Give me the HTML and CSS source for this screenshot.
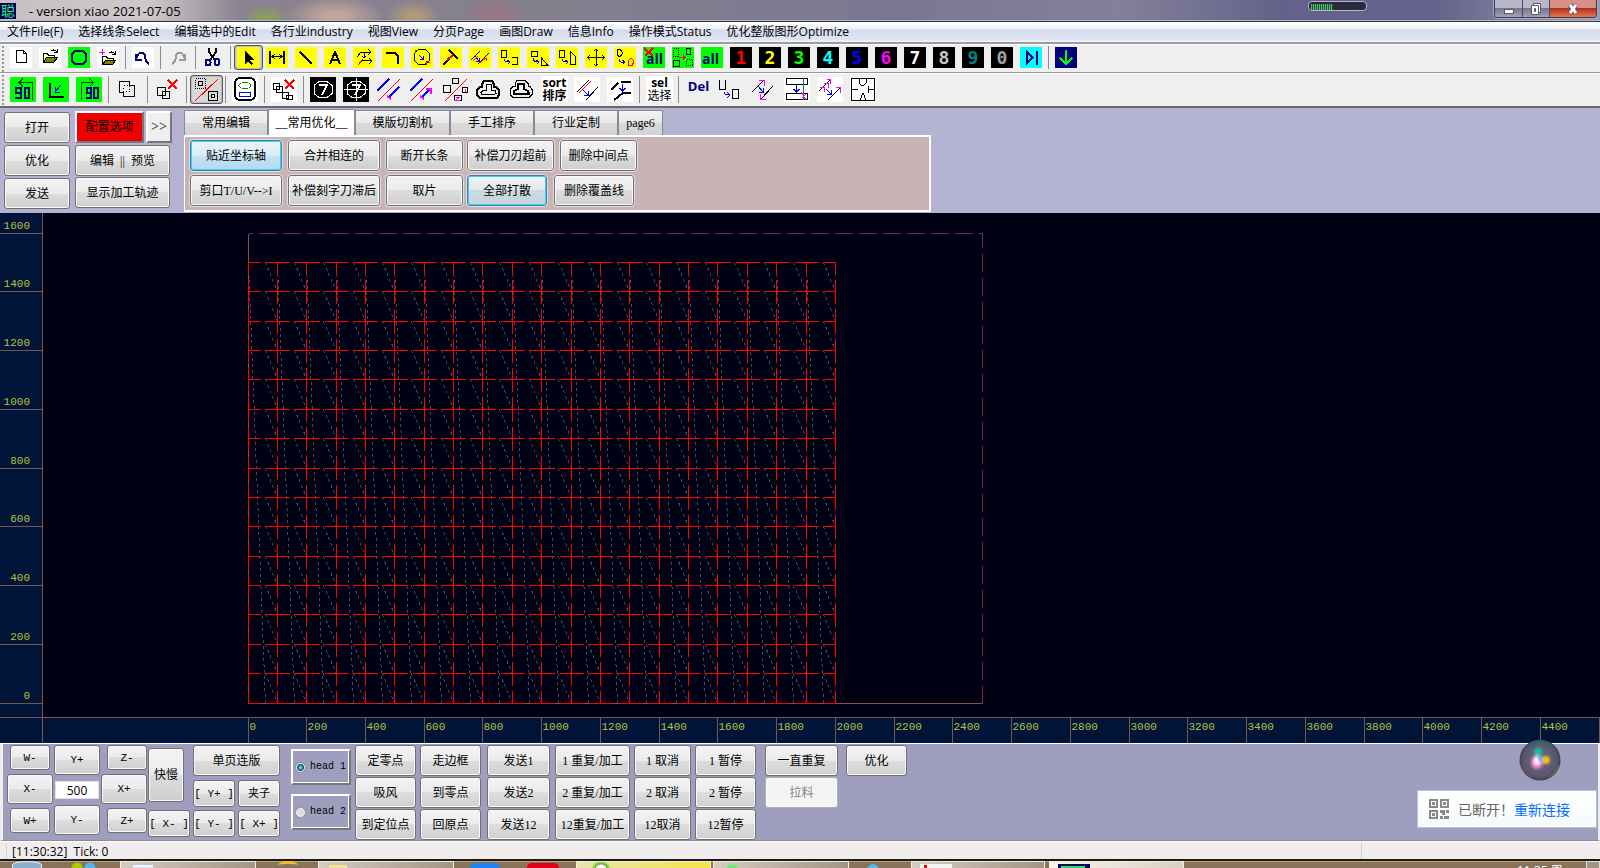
FILE: index.html
```html
<!DOCTYPE html>
<html lang="zh-CN">
<head>
<meta charset="utf-8">
<meta name="viewport" content="width=device-width, initial-scale=1">
<title>version xiao 2021-07-05</title>
<link rel="stylesheet" href="styles.css">
</head>
<body>
<header class="titlebar">
  <span class="app-icon" aria-hidden="true">聪</span>
  <h1 class="title">- version xiao 2021-07-05</h1>
  <span class="meter" aria-hidden="true"><i></i></span>
  <div class="window-buttons">
    <button class="win win-min" aria-label="Minimize"><svg width="12" height="8"><rect x="1.500" y="2.500" width="9" height="4" fill="#fff" stroke="#555a6c"/></svg></button>
    <button class="win win-max" aria-label="Restore"><svg width="12" height="14"><path d="M3.500 1.500h7v9h-7z" fill="#fff" stroke="#555a6c"/><path d="M1.500 3.500h7v9h-7z" fill="#fff" stroke="#555a6c"/><path d="M4.500 6.500h1v3h-1z" fill="#778" stroke="#555a6c"/></svg></button>
    <button class="win win-close" aria-label="Close"><svg width="14" height="12"><path d="M4 2l6 8M10 2l-6 8" stroke="#4b4f60" stroke-width="5"/><path d="M4 2l6 8M10 2l-6 8" stroke="#fff" stroke-width="3"/></svg></button>
  </div>
</header>

<nav class="menubar">
  <a href="#file">文件File(F)</a><a href="#select">选择线条Select</a><a href="#edit">编辑选中的Edit</a><a href="#industry">各行业industry</a><a href="#view">视图View</a><a href="#page">分页Page</a><a href="#draw">画图Draw</a><a href="#info">信息Info</a><a href="#status">操作模式Status</a><a href="#optimize">优化整版图形Optimize</a>
</nav>

<div class="toolbar small" role="toolbar" aria-label="Drawing">
  <button class="tool" aria-label="New"><svg class="w"><path d="M6.500 3.500h7l3 3v9h-10zM13.500 3.500v3h3" fill="#fff" stroke="#000"/></svg></button>
  <button class="tool" aria-label="Open"><svg class="w"><path d="M4.500 15.500v-9h4l1 2h6v2" fill="#ffffc0" stroke="#000"/><path d="M4.500 15.500l3-5h11l-4 5z" fill="#808000" stroke="#000"/><path d="M12 4c2-2 4-1 6 1m0-3v3.500h-3" fill="none" stroke="#000"/></svg></button>
  <button class="tool" aria-label="Ring"><svg class="g"><path d="M7 4h8l3 3v7l-3 3H7l-3-3V7z" fill="none" stroke="#000080" stroke-width="2"/></svg></button>
  <button class="tool" aria-label="Add file"><svg class="w"><path d="M2 5h6M5 2v6" stroke="#f0f" fill="none"/><path d="M5.500 17.500v-8h4l1 2h6v1" fill="#ffffc0" stroke="#000"/><path d="M5.500 17.500l3-4h10l-3 4z" fill="#808000" stroke="#000"/><path d="M12 6c2-2 4-1 6 1m0-3v3.500h-3" fill="none" stroke="#000"/></svg></button>
  <span class="sep"></span>
  <button class="tool" aria-label="Undo"><svg class="w"><path d="M4 7v6h6M4 12c2-8 8-8 9-3 0 4 1 6 4 8" fill="none" stroke="#000080" stroke-width="2"/></svg></button>
  <span class="sep"></span>
  <button class="tool" aria-label="Redo"><svg><path d="M18 7v6h-6M18 12c-2-8-8-8-9-3 0 4-1 6-4 8" fill="none" stroke="#999" stroke-width="2"/></svg></button>
  <span class="sep"></span>
  <button class="tool" aria-label="Cut"><svg><path d="M7 1v4l6 8M14 1v4l-6 8" fill="none" stroke="#000" stroke-width="2"/><ellipse cx="6" cy="15.500" rx="2.500" ry="3" fill="none" stroke="#000080" stroke-width="2"/><ellipse cx="15" cy="15" rx="2.500" ry="3" fill="none" stroke="#000080" stroke-width="2"/></svg></button>
  <span class="sep"></span>
  <button class="tool pressed" aria-label="Pointer" aria-pressed="true"><svg class="y"><path d="M8 4v13l3-3 3 4 2-1-3-4h5z" fill="#000"/></svg></button>
  <button class="tool" aria-label="Distance"><svg class="y"><path d="M4 4v13M18 4v13" stroke="#000" stroke-width="2"/><path d="M6 9.500h10M9 7l-3 2.500L9 12M13 7l3 2.500-3 2.500" stroke="#000" fill="none"/></svg></button>
  <button class="tool" aria-label="Line"><svg class="y"><path d="M5 5l12 12" stroke="#000" stroke-width="2"/></svg></button>
  <button class="tool" aria-label="Text"><svg class="y"><path d="M6 17l5-12 5 12M7.500 13h7" fill="none" stroke="#000" stroke-width="2"/></svg></button>
  <button class="tool" aria-label="Join"><svg class="y"><path d="M4 10l4-5h10m-3-3l3 3-3 3M9 13l10 1m-3-3l3 3-3 3" fill="none" stroke="#000"/><path d="M11 5v6M9 9l2 2 2-2" fill="none" stroke="#00f"/><path d="M10 12l-5 6" fill="none" stroke="#f00"/></svg></button>
  <button class="tool" aria-label="Fillet"><svg class="y"><path d="M4 6h7q5 0 5 5v6" fill="none" stroke="#000" stroke-width="2"/></svg></button>
  <button class="tool" aria-label="Circle"><svg class="y"><circle cx="11" cy="10" r="8" fill="none" stroke="#000"/><path d="M7 3H4v3" fill="none" stroke="#008000"/><path d="M8 8l4 4m0-3v3H9" fill="none" stroke="#00f"/><path d="M15 18l1-4 3 2" fill="none" stroke="#f00"/></svg></button>
  <button class="tool" aria-label="Corner"><svg class="y"><path d="M9 3l9 9M3 18l6-6" stroke="#000" stroke-width="2"/><path d="M7 13l6-5" stroke="#f00" stroke-width="2"/></svg></button>
  <button class="tool" aria-label="Parallel"><svg class="y"><path d="M2 13L11 4M9 17L20 6" stroke="#000"/><path d="M6 9l4 5m0-3v3H7" stroke="#00f" fill="none"/><path d="M4 14l5-5M10 16l7-5m-3 0h3v3" stroke="#f00" fill="none"/></svg></button>
  <button class="tool" aria-label="Copy shape"><svg class="y"><path d="M3.500 3.500h5v7h-5zM14 10.500h5v7h-5" fill="none" stroke="#000"/><path d="M6 12q0 3 5 3m-2-2l3 2-2 2" fill="none" stroke="#00f"/></svg></button>
  <button class="tool" aria-label="Scale shape"><svg class="y"><path d="M4.500 4.500h6v5h-6zM14.500 11v7h6z" fill="none" stroke="#000"/><path d="M6 11q0 4 5 4m-2-2l3 2-2 2" fill="none" stroke="#00f"/></svg></button>
  <button class="tool" aria-label="Shear shape"><svg class="y"><path d="M3.500 3.500h5v7h-5zM14.500 4.500v13h5v-8z" fill="none" stroke="#000"/><path d="M6 12q0 3 5 3m-2-2l3 2-2 2" fill="none" stroke="#00f"/></svg></button>
  <button class="tool" aria-label="Move"><svg class="y"><path d="M3 10.500h16M11 2v17M5 8l-2 2.500L5 13M17 8l2 2.500-2 2.500M9 4l2-2 2 2M9 17l2 2 2-2" fill="none" stroke="#000"/></svg></button>
  <button class="tool" aria-label="Rotate shape"><svg class="y"><path d="M3 3l3-1 3 4-3 4-3-2z" fill="none" stroke="#000"/><path d="M14 14l3-3 3 3-2 5-4-1z" fill="none" stroke="#f00"/><path d="M5 12q0 4 5 3m-2-2l3 2-2 2" fill="none" stroke="#00f"/></svg></button>
  <button class="tool" aria-label="Clear all"><svg class="g"><path d="M1 1l9 8M10 1L2 9" stroke="#f00" stroke-width="2"/><text x="3" y="17" class="all">all</text></svg></button>
  <button class="tool" aria-label="Array"><svg class="g"><path d="M1.500 1.500h5v8h-5zM14.500 12.500h6v6h-6z" fill="none" stroke="#000" stroke-dasharray="1 1"/><path d="M14.500 1.500h4v6h-4zM1.500 13.500h6v6h-6z" fill="none" stroke="#000"/><path d="M7 10.500h6m-2-2l2 2-2 2" fill="none" stroke="#f06"/></svg></button>
  <button class="tool" aria-label="Select all"><svg class="g"><text x="1" y="17" class="all">all</text></svg></button>
  <button class="tool num n1">1</button>
  <button class="tool num n2">2</button>
  <button class="tool num n3">3</button>
  <button class="tool num n4">4</button>
  <button class="tool num n5">5</button>
  <button class="tool num n6">6</button>
  <button class="tool num n7">7</button>
  <button class="tool num n8">8</button>
  <button class="tool num n9">9</button>
  <button class="tool num n0">0</button>
  <button class="tool" aria-label="Next"><svg class="c"><path d="M6.500 4v13l6-6.500zM17 4v14" fill="none" stroke="#000080" stroke-width="2"/></svg></button>
  <span class="sep"></span>
  <button class="tool" aria-label="Down"><svg class="n"><path d="M11 3v14M5 11l6 6 6-6" fill="none" stroke="#0f0" stroke-width="2"/></svg></button>
</div>

<div class="toolbar large" role="toolbar" aria-label="Arrange">
  <button class="tool" aria-label="Rotate left"><svg class="g"><path d="M22.500 23V5.500H9m4-4L9 5.500l4 4" fill="none" stroke="#004000"/><path d="M11 16H6v-5h5v10H5M15 11h4v10h-4z" fill="none" stroke="#000080" stroke-width="2"/></svg></button>
  <button class="tool" aria-label="To origin"><svg class="g"><path d="M7 6v14h14" fill="none" stroke="#000" stroke-width="2"/><path d="M18 8l-6 7m0-5v5h5" fill="none" stroke="#00f"/></svg></button>
  <button class="tool" aria-label="Rotate right"><svg class="g"><path d="M5.500 23V5.500h12m-4-4l4 4-4 4" fill="none" stroke="#004000"/><path d="M15 16h-4v-5h4v10h-5M18 11h4v10h-4z" fill="none" stroke="#000080" stroke-width="2"/></svg></button>
  <span class="sep"></span>
  <button class="tool" aria-label="Merge"><svg><path d="M4.500 4.500h10v4h5v11h-11v-4h-4z" fill="none" stroke="#000"/><path d="M8.500 8.500h6v6h-6z" fill="none" stroke="#000" stroke-dasharray="1 2"/></svg></button>
  <span class="sep"></span>
  <button class="tool" aria-label="Ungroup"><svg><path d="M3.500 10.500h8v8h-8zM8.500 14.500h7v7h-7z" fill="none" stroke="#000"/><path d="M14 3l9 9M23 3l-9 9" stroke="#f00" stroke-width="2"/></svg></button>
  <span class="sep"></span>
  <button class="tool pressed" aria-label="Split" aria-pressed="true"><svg><path d="M2.500 1.500h10v10h-10z" fill="none" stroke="#000" stroke-dasharray="1 1"/><path d="M5.500 4.500h4v4h-4zM15.500 14.500h9v9h-9zM18.500 17.500h3v3h-3z" fill="none" stroke="#000"/><path d="M2 24L25 2" stroke="#f00"/></svg></button>
  <span class="sep"></span>
  <button class="tool" aria-label="Nest"><svg class="w"><rect x="3" y="1" width="20" height="22" rx="5" fill="#fff" stroke="#000" stroke-width="2"/><ellipse cx="13" cy="8.500" rx="6" ry="3" fill="none" stroke="#008000"/><path d="M7.500 15.500h11v4h-11z" fill="none" stroke="#00f"/></svg></button>
  <span class="sep"></span>
  <button class="tool" aria-label="Remove overlaps"><svg class="w"><path d="M2.500 6.500h6v6h-6zM5.500 9.500h6v6h-6zM11.500 15.500h6v6h-6zM15.500 18.500h6v4h-6z" fill="none" stroke="#000"/><path d="M14 3l9 9M23 3l-9 9" stroke="#f00" stroke-width="2"/></svg></button>
  <span class="sep"></span>
  <button class="tool" aria-label="Seven"><svg class="k"><path d="M9 4.500h8l5 4v8l-5 4H9l-5-4v-8z" fill="none" stroke="#fff"/><path d="M9 8h8l-5 10" fill="none" stroke="#fff" stroke-width="2"/></svg></button>
  <button class="tool" aria-label="Seven target"><svg class="k"><path d="M9 4.500h8l5 4v8l-5 4H9l-5-4v-8zM1 12.500h24M13 1v23" fill="none" stroke="#fff"/><path d="M9 8h8l-5 10" fill="none" stroke="#fff" stroke-width="2"/></svg></button>
  <button class="tool" aria-label="Offset"><svg><path d="M1 14L13 2M13 20l10-10" stroke="#00f" stroke-width="2"/><path d="M2 24L24 2" stroke="#f00"/><path d="M11 19l4 3" stroke="#f0f" stroke-width="2"/></svg></button>
  <button class="tool" aria-label="Offset arrow"><svg><path d="M1 14L13 2M13 20l8-8" stroke="#00f" stroke-width="2"/><path d="M2 24L24 2" stroke="#f00"/><path d="M11 19l4 3M17 12h5v5" fill="none" stroke="#f0f" stroke-width="2"/></svg></button>
  <button class="tool" aria-label="Swap"><svg><path d="M1.500 8.500h7v7h-7zM10.500 1.500h6v5h-6z" fill="none" stroke="#000"/><path d="M20.500 10.500h5v5h-5zM12.500 18.500h7v5h-7z" fill="#fff" stroke="#000"/><path d="M23 12v3M14 20h4l-4 3h4" fill="none" stroke="#f0f"/><path d="M3 24L25 2" stroke="#f00"/></svg></button>
  <button class="tool" aria-label="Outline outside"><svg><path d="M9 4h8l2 3v3h2l3 3v5l-2 3H5l-3-3v-5l3-3h2V7z" fill="none" stroke="#000" stroke-width="2"/><path d="M11 7.500h5v6h4l1 3-2 1H7l-1-2 2-2h3z" fill="none" stroke="#000"/></svg></button>
  <button class="tool" aria-label="Outline inside"><svg><path d="M9 3.500h8l3 3v3h2l2 3v5l-3 3H5l-3-3v-5l3-3h2v-3z" fill="none" stroke="#000"/><path d="M10 7h6v5l4 2 1 3H6v-3l4-2z" fill="none" stroke="#000" stroke-width="2"/></svg></button>
  <button class="tool word strong"><span>sort</span><span>排序</span></button>
  <button class="tool" aria-label="Shift line"><svg class="w"><path d="M3 15L15 3" stroke="#000"/><path d="M5 16L17 4" stroke="#f00" stroke-width="1"/><path d="M12 23l12-13" stroke="#000"/><path d="M8 12l6 6m0-4v4h-4" fill="none" stroke="#00f"/></svg></button>
  <button class="tool" aria-label="Shift chain"><svg class="w"><path d="M4 13l7-7M14 5h10M7 23l9-7h8" fill="none" stroke="#000" stroke-width="2"/><path d="M15.500 7v7m-3-3l3 3 3-3" fill="none" stroke="#00f"/></svg></button>
  <span class="sep"></span>
  <button class="tool word"><b>sel</b><span>选择</span></button>
  <span class="sep"></span>
  <button class="tool word del">Del</button>
  <button class="tool" aria-label="Close shape"><svg><path d="M1.500 3v9h6V3M14.500 12.500h6v9h-6z" fill="none" stroke="#000"/><path d="M6 15q0 3 6 3m-3-3l3 3-3 3" fill="none" stroke="#00f"/></svg></button>
  <button class="tool" aria-label="Extend"><svg><path d="M1 15L13 3M10 22L22 9" stroke="#000"/><path d="M8 3.500h5v5M9.500 17v5h5" fill="none" stroke="#f0f"/><path d="M7 9l5 6m0-4v4H8" fill="none" stroke="#00f"/></svg></button>
  <button class="tool" aria-label="Trim"><svg class="w"><path d="M2.500 1.500h21v6h-21zM2.500 16.500h21v6h-21z" fill="none" stroke="#000"/><path d="M19.500 1v22" stroke="#008080"/><path d="M12.500 8v7m-3-3l3 3 3-3" fill="none" stroke="#00f"/><path d="M17 15l5 8m0-6l-4 4" stroke="#f0f"/></svg></button>
  <button class="tool" aria-label="Extend both"><svg class="w"><path d="M2 14L14 2M11 23l13-13" stroke="#000"/><path d="M10 2.500h3v4M3 10.500h4v4M7 6.500h4v4M19 10.500h4v5" fill="none" stroke="#f0f"/><path d="M9 12l5 5m0-4v4h-4" fill="none" stroke="#00f"/></svg></button>
  <button class="tool" aria-label="Notches"><svg class="w"><path d="M1.500 1.500h23v22h-23zM9 2v4l2 2h3l2-2V2M2 12.500h6M24 12.500h-6M18.500 9v7M10 23l3-7 3 7" fill="none" stroke="#000"/></svg></button>
</div>

<section class="panel">
  <div class="quick">
    <div class="col narrow"><button class="btn">打开</button><button class="btn">优化</button><button class="btn">发送</button></div>
    <div class="col wide">
      <div class="pair"><button class="btn red">配置选项</button><button class="btn flat">&gt;&gt;</button></div>
      <button class="btn">编辑 &nbsp;|| &nbsp;预览</button>
      <button class="btn">显示加工轨迹</button>
    </div>
  </div>
  <div class="tabbox">
    <div class="tabs" role="tablist">
      <button class="tab w84" role="tab">常用编辑</button><button class="tab active" role="tab" aria-selected="true">__常用优化__</button><button class="tab w94" role="tab">模版切割机</button><button class="tab w84" role="tab">手工排序</button><button class="tab w84" role="tab">行业定制</button><button class="tab page6" role="tab">page6</button>
    </div>
    <div class="tabpage">
      <div class="line"><button class="btn b92 hot">贴近坐标轴</button><button class="btn b92">合并相连的</button><button class="btn b77">断开长条</button><button class="btn b87">补偿刀刃超前</button><button class="btn b77">删除中间点</button></div>
      <div class="line"><button class="btn b92">剪口T/U/V--&gt;I</button><button class="btn b92">补偿刻字刀滞后</button><button class="btn b77">取片</button><button class="btn b80 focus">全部打散</button><button class="btn b80">删除覆盖线</button></div>
    </div>
  </div>
</section>

<main class="workspace"><svg id="plot" class="plot" role="img" aria-label="Cutting layout"></svg></main>

<section class="controls">
  <div class="jog">
    <div class="jcol"><button class="btn s">W-</button><button class="btn m">X-</button><button class="btn s">W+</button></div>
    <div class="jcol mid"><button class="btn m">Y+</button><input class="step" type="text" value="500" aria-label="Step"><button class="btn m">Y-</button></div>
    <div class="jcol end"><button class="btn s">Z-</button><button class="btn m">X+</button><button class="btn s">Z+</button></div>
  </div>
  <div class="feed">
    <div class="fcol"><button class="btn tall">快慢</button><button class="btn key">[ X- ]</button></div>
    <div class="fgrid"><button class="btn span">单页连版</button><button class="btn key">[ Y+ ]</button><button class="btn key">夹子</button><button class="btn key">[ Y- ]</button><button class="btn key">[ X+ ]</button></div>
  </div>
  <div class="heads">
    <label class="head"><input type="radio" name="head" checked><span>head 1</span></label>
    <label class="head"><input type="radio" name="head"><span>head 2</span></label>
  </div>
  <div class="stack c61"><button class="btn">定零点</button><button class="btn">吸风</button><button class="btn">到定位点</button></div>
  <div class="stack c61"><button class="btn">走边框</button><button class="btn">到零点</button><button class="btn">回原点</button></div>
  <div class="stack c63"><button class="btn">发送1</button><button class="btn">发送2</button><button class="btn">发送12</button></div>
  <div class="stack c75"><button class="btn">1 重复/加工</button><button class="btn">2 重复/加工</button><button class="btn">12重复/加工</button></div>
  <div class="stack c57"><button class="btn">1 取消</button><button class="btn">2 取消</button><button class="btn">12取消</button></div>
  <div class="stack c60"><button class="btn">1 暂停</button><button class="btn">2 暂停</button><button class="btn">12暂停</button></div>
  <div class="stack c73"><button class="btn">一直重复</button><button class="btn" disabled>拉料</button></div>
  <div class="stack c61"><button class="btn">优化</button></div>
  <div class="orb" aria-hidden="true"><svg width="42" height="42"><defs><radialGradient id="glass"><stop offset="0" stop-color="#6d6c88"/><stop offset=".8" stop-color="#59586e"/><stop offset="1" stop-color="#3d4354"/></radialGradient><filter id="soft"><feGaussianBlur stdDeviation="1"/></filter></defs><circle cx="21" cy="21" r="20.500" fill="url(#glass)"/><path d="M6 9a19 19 0 0 1 28-1" fill="none" stroke="#087c6c"/><path d="M3 26a19 19 0 0 0 10 12" fill="none" stroke="#a84060"/><path d="M39 26a19 19 0 0 1-9 12" fill="none" stroke="#8c7840"/><g filter="url(#soft)"><circle cx="19" cy="13" r="4" fill="#00c8a0"/><ellipse cx="18" cy="23" rx="6" ry="7" fill="#f080c0"/><ellipse cx="18" cy="22" rx="3" ry="4" fill="#fff"/><circle cx="22" cy="20" r="3" fill="#60a0ff"/><circle cx="27" cy="21" r="4" fill="#f0c010"/></g></svg></div>
  <div class="notice">
    <svg width="20" height="20" aria-hidden="true"><path d="M1 1h7v7H1zM12 1h7v7h-7zM1 12h7v7H1z" fill="none" stroke="#888" stroke-width="2"/><path d="M3 3h3v3H3zM14 3h3v3h-3zM3 14h3v3H3zM11 11h5v5h-3v-2h-2zM17 11h3v3h-3zM11 17h3v3h-3zM15 17h5v3h-5z" fill="#888"/></svg>
    <span>已断开！<a href="#reconnect">重新连接</a></span>
  </div>
</section>

<footer class="status"><span class="ticks">[11:30:32] &nbsp;Tick: 0</span><span class="status-cell"></span></footer>

<div class="taskbar" aria-hidden="true">
  <i class="t start"></i><i class="t people"></i><i class="t app doc"></i><i class="t ie"></i><i class="t app folder"></i><i class="t blue"></i><i class="t redapp"></i><i class="t app yellow"></i><i class="t app chat"></i><i class="t cloud"></i><i class="t app cad"></i><i class="t app current"></i><span class="clock">11:35 周</span><i class="t desk"></i>
</div>
<script src="plot.js"></script>
</body>
</html>
```
FILE: styles.css
```css
* { box-sizing: border-box; }
body {
  margin: 0;
  min-height: 100vh;
  display: flex;
  flex-direction: column;
  background: #b4b3d2;
  color: #000;
  font: 12px/16px "Open Sans", "Noto Sans CJK SC", sans-serif;
}
button, input { font: inherit; color: inherit; margin: 0; padding: 0; }

/* title bar */
.titlebar {
  height: 22px;
  display: flex;
  align-items: flex-start;
  border-bottom: 1px solid #38364a;
  box-shadow: inset 0 -1px #b5b4c6;
  background:
    radial-gradient(ellipse 24px 16px at 266px 20px, #8aa05c 20%, transparent),
    radial-gradient(ellipse 50px 20px at 335px 16px, #c0a69a 20%, transparent),
    radial-gradient(ellipse 28px 16px at 413px 16px, #b09a78 20%, transparent),
    radial-gradient(ellipse 34px 18px at 494px 14px, #987682 20%, transparent),
    linear-gradient(90deg, #c4c0c4 0, #cfc8c8 150px, #8a8290 240px, #84808e 560px, #7a7792 900px, #83809a 70%, #64628a 80%, #66648c 90%, #9a9ab6 100%);
}
.app-icon { width: 16px; height: 16px; margin-top: 3px; background: #000050; color: #30e880; font-size: 14px; line-height: 16px; text-align: center; }
.title { margin: 0 auto 0 13px; font-size: 13px; font-weight: 400; line-height: 22px; }
.meter { width: 59px; height: 10px; margin: 1px 127px 0 0; padding: 2px; background: #2b2a3c; border: 1px solid #b4b3c8; border-radius: 4px; }
.meter i { display: block; width: 22px; height: 6px; background: repeating-linear-gradient(90deg, #50c070 0 1px, #245038 1px 2px); }
.window-buttons { display: flex; margin-right: 3px; border: 1px solid #3c3b50; border-top: 0; border-radius: 0 0 4px 4px; box-shadow: 0 0 0 1px #aaaabf; overflow: hidden; }
.win { height: 17px; width: 27px; display: flex; align-items: center; justify-content: center; border: 0; border-right: 1px solid #4a495e; background: linear-gradient(#b9b8cb 0 50%, #77768f 50%, #a3a2b8); }
.win-min { width: 28px; padding-top: 5px; }
.win-close { width: 46px; border-right: 0; background: linear-gradient(#d88f85 0 45%, #b4301c 50%, #e07850); }

/* menu */
.menubar { height: 22px; display: flex; gap: 15px; padding: 0 7px; border-bottom: 2px solid #9b9ba3; background: linear-gradient(#fff 0, #edf0f8 7px, #d5dbee 8px, #e0e5f5 18px, #f4f4f4 19px); }
.menubar a { color: #000; text-decoration: none; line-height: 20px; white-space: nowrap; }

/* toolbars */
.toolbar { display: flex; align-items: flex-start; padding-left: 7px; background: radial-gradient(circle, #999 1px, transparent 1px) 1px 4px / 4px 4px repeat-y, #efefef; border-top: 1px solid #fff; }
.small { height: 29px; border-bottom: 1px solid #999; }
.large { height: 35px; border-bottom: 2px solid #696969; padding-top: 1px; }
.tool { flex: none; display: flex; align-items: center; justify-content: center; border: 0; background: none; }
.tool svg { display: block; shape-rendering: crispEdges; }
.small .tool { width: 29px; height: 25px; padding-right: 1px; }
.small svg { width: 22px; height: 21px; }
.large .tool { width: 33px; height: 29px; padding-right: 1px; }
.large svg { width: 26px; height: 25px; }
.tool.pressed { border: 1px solid #555; border-radius: 3px; background: #d8d8d8; box-shadow: inset 0 0 2px #777; }
.sep { flex: none; width: 6px; height: 25px; background: linear-gradient(#8c8c8c, #8c8c8c) 2px 1px / 1px 23px no-repeat; }
.large .sep { height: 28px; background-size: 1px 27px; }
.w { background: #fff; }
.g { background: #0f0; }
.y { background: #ff0; }
.c { background: #0ff; }
.n { background: #000080; }
.k { background: #000; }
.all { font: bold 14px "Open Sans", sans-serif; fill: #000080; }
.small .num { width: 22px; height: 21px; margin: 2px 4px 0 3px; padding: 0; background: #000; font: bold 18px/21px "DejaVu Sans Mono", monospace; }
.n1 { color: #f00; } .n2 { color: #ff0; } .n3 { color: #0f0; } .n4 { color: #0ff; } .n5 { color: #00f; }
.n6 { color: #f0f; } .n7 { color: #fff; } .n8 { color: #c8c8c8; } .n9 { color: #008080; } .n0 { color: #a0a0a0; }
.large .word { width: 27px; height: 26px; margin: 1px 3px; padding: 0; flex-direction: column; background: #fff; font: 12px/13px "Open Sans", "Noto Sans CJK SC", sans-serif; }
.large .strong { font-weight: 700; }
.large .del { justify-content: flex-start; background: none; color: #000080; font-weight: 700; font-size: 13px; line-height: 20px; }

/* buttons */
.btn {
  height: 31px;
  border: 1px solid #707070;
  border-radius: 3px;
  background: linear-gradient(#f3f3f3, #ebebeb 50%, #dddddd 50%, #cfcfcf);
  box-shadow: inset 0 0 0 1px #fafafa;
  font: 12px/16px "Liberation Serif", "Noto Sans CJK SC", serif;
  text-align: center;
  white-space: nowrap;
}
.btn:disabled { background: #f4f4f4; border-color: #adb2b5; color: #838383; }
.btn.hot, .btn.focus { border-color: #3c7fb1; box-shadow: inset 0 0 0 1px #3fd0f8; }
.btn.hot { background: linear-gradient(#eaf4fa, #d9ecf6 50%, #c4e2f4 50%, #b4d8ee); }
.btn.focus { background: linear-gradient(#edf3f6, #e0e9ee 50%, #cddae2 50%, #c5d3dc); }

/* upper panel */
.panel { height: 105px; display: flex; gap: 12px; padding: 1px 0 0 4px; }
.quick { display: flex; gap: 5px; }
.col { display: flex; flex-direction: column; gap: 2px; padding-top: 3px; }
.narrow { width: 66px; }
.wide { width: 97px; padding-top: 2px; gap: 1px; }
.wide > .btn { width: 95px; }
.pair { display: flex; gap: 2px; height: 33px; }
.red, .flat { height: 32px; border-radius: 0; border: 2px solid; border-color: #fff #777 #777 #fff; box-shadow: none; }
.red { width: 69px; background: #f00000; }
.flat { flex: 1; background: #efefef; font-size: 14px; }
.tabbox { width: 747px; }
.tabs { display: flex; align-items: flex-end; height: 26px; }
.tab { height: 25px; border: 1px solid #858b9a; border-bottom: 0; background: linear-gradient(#f2f2f2, #e8e8e8 50%, #dadada 50%, #d2d2d2); font: 12px/16px "Liberation Serif", "Noto Sans CJK SC", serif; white-space: nowrap; }
.w84 { width: 84px; }
.w94 { width: 95px; }
.page6 { width: 45px; }
.tab.active { width: 87px; height: 26px; background: #fff; }
.tabpage { height: 77px; padding: 4px 5px; display: flex; flex-direction: column; gap: 4px; background: #c8b4b4; border: 1px solid #fff; border-width: 1px 2px 2px 1px; box-shadow: inset 0 1px #fff; }
.line { display: flex; gap: 4px; }
.tabpage .btn { outline: 1px solid #e4dcdc; }
.b92 { width: 92px; margin-right: 2px; }
.b77 { width: 77px; }
.b87 { width: 87px; margin-right: 2px; }
.b80 { width: 80px; margin-right: 3px; }

/* plot */
.workspace { flex: 1; min-height: 530px; display: flex; background: #000014; }
.plot { flex: 1; width: 100%; min-height: 530px; shape-rendering: crispEdges; }
.plot text { font: 11px "Liberation Mono", monospace; fill: #b4c23c; }
.ruler { fill: #001438; }
.tick { stroke: #80544e; fill: none; }
.bed { stroke: #802c3c; stroke-dasharray: 18 6; fill: none; }
.cut { stroke: #f00; fill: none; }
.travel { stroke: #484850; stroke-dasharray: 3 3; fill: none; }

/* lower panel */
.controls { position: relative; height: 98px; display: flex; align-items: flex-start; padding: 1px 0 0 4px; background: #a09ebe; border-top: 1px solid #fff; border-bottom: 1px solid #8c8c94; border-left: 3px solid #eee; border-right: 2px solid #eee; }
.jog { display: flex; gap: 1px; }
.jcol { width: 46px; display: flex; flex-direction: column; align-items: center; gap: 4px; }
.jcol.mid { gap: 6px; }
.jcol.end { align-items: flex-end; }
.s { width: 40px; height: 25px; }
.m { width: 46px; height: 30px; }
.jog .btn, .key { font-family: "Liberation Mono", "Noto Sans CJK SC", monospace; font-size: 11px; }
.step { width: 44px; height: 18px; border: 1px solid #e0e0f0; background: #fff; text-align: center; }
.feed { display: flex; gap: 3px; margin-left: 1px; }
.fcol { display: flex; flex-direction: column; width: 42px; gap: 8px; padding-top: 3px; }
.tall { width: 36px; height: 54px; }
.key { height: 27px; }
.fgrid { display: grid; grid-template-columns: 42px 42px; gap: 3px; }
.span { grid-column: 1 / 3; height: 31px; margin-bottom: 1px; }
.heads { margin: 4px 4px 0 11px; display: flex; flex-direction: column; gap: 9px; }
.head { width: 60px; height: 36px; display: flex; align-items: center; gap: 4px; padding-left: 2px; border: 2px solid; border-color: #fff #777 #777 #fff; box-shadow: inset -1px -1px #fff; font: 10px/16px "Liberation Mono", monospace; white-space: nowrap; }
.head input { appearance: none; flex: none; width: 11px; height: 11px; border-radius: 50%; border: 1px solid #8e8f8f; background: #ddd; box-shadow: inset 0 0 0 1px #f4f4f4; }
.head input:checked { background: radial-gradient(circle, #58c8f0 1px, #104870 3px, #e8e8e8 4px); box-shadow: none; }
.stack { display: flex; flex-direction: column; gap: 1px; margin-right: 4px; }
.c61 { width: 61px; }
.c63 { width: 63px; margin-left: 2px; }
.c75 { width: 75px; margin-left: 1px; }
.c57 { width: 57px; }
.c60 { width: 61px; }
.c73 { width: 73px; margin: 0 8px 0 5px; }
.orb { position: absolute; right: 37px; top: -5px; }
.notice { position: absolute; right: 1px; top: 46px; width: 180px; height: 38px; display: flex; align-items: center; gap: 9px; padding-left: 11px; background: linear-gradient(#fff, #f6fafc); border: 1px solid #b4c4d4; color: #666; font: 14px/20px "Noto Sans CJK SC", sans-serif; white-space: nowrap; }
.notice a { color: #0a6cff; text-decoration: none; }

/* status bar */
.status { height: 18px; display: flex; padding: 1px 0 0 6px; background: #f0edec; border-top: 1px solid #fff; line-height: 17px; }
.ticks { flex: 1; padding-left: 5px; border-left: 1px solid #d4d4d4; }
.status-cell { width: 17%; max-width: 239px; border-left: 1px solid #d0d0d0; }

/* task bar */
.taskbar { height: 9px; display: grid; grid-template-columns: 12px 30px 28px 28px 22px 136px 22px 40px 136px 15px 32px 26px 32px 17px 135px 2px 136px 18px 12px 32px 134px 4px 135px 1fr 60px 35px; overflow: hidden; background: #8a7358; border-top: 2px solid #1c1812; box-shadow: inset 0 1px #b4a48c; }
.t { height: 8px; }
.start { grid-column: 2; border-radius: 50% 50% 0 0; background: #8cb0cc; border: 1px solid #e8eef4; }
.people { grid-column: 4; background: radial-gradient(circle at 7px 7px, #a8c800 5px, transparent 6px), radial-gradient(circle at 20px 7px, #58b4e8 5px, transparent 6px); }
.app { border: 1px solid #f4eee4; background: linear-gradient(90deg, #d4ccc0, #a49484); }
.doc { grid-column: 6; background: linear-gradient(#f8fbff, #b8cce8) 12px 3px / 20px 6px no-repeat, linear-gradient(90deg, #d4ccc0, #a49484); }
.ie { grid-column: 8; width: 20px; border-top: 3px solid #f4c028; border-radius: 50%; }
.folder { grid-column: 9; background: linear-gradient(#f0e49c, #f0e49c) 10px 3px / 18px 6px no-repeat, linear-gradient(90deg, #d4ccc0, #a49484); }
.blue { grid-column: 11; margin-top: 2px; border-radius: 8px 8px 0 0; background: #1c84f8; }
.redapp { grid-column: 13; margin-top: 2px; border-radius: 5px 5px 0 0; background: #e00018; }
.yellow { grid-column: 15; background: radial-gradient(circle at 24px 8px, #fff 5px, #58b828 6px, transparent 10px), linear-gradient(90deg, #e8e4b0, #f4e444); }
.chat { grid-column: 17; background: radial-gradient(circle at 18px 9px, #70e880 6px, transparent 7px), linear-gradient(90deg, #d4ccc0, #a49484); }
.cloud { grid-column: 19; margin-top: 3px; border-radius: 6px 6px 0 0; background: #58b8e8; }
.cad { grid-column: 21; background: linear-gradient(#e00, #e00) 12px 3px / 3px 6px no-repeat, linear-gradient(#f4f4f4, #f4f4f4) 8px 2px / 32px 6px no-repeat, linear-gradient(90deg, #d4ccc0, #a49484); }
.current { grid-column: 23; background: linear-gradient(#20e060, #20e060) 11px 4px / 24px 2px no-repeat, linear-gradient(#000060, #000060) 8px 2px / 32px 6px no-repeat, linear-gradient(90deg, #f8f4ec, #d8d0c4); }
.clock { grid-column: 25; padding: 2px 0 0 12px; color: #fff; font-size: 12px; line-height: 16px; white-space: nowrap; }
.desk { grid-column: 26; justify-self: end; width: 14px; background: #a09484; border: 1px solid #ddd; }
```
FILE: plot.js
```js
const svg = document.getElementById('plot');
const NS = 'http://www.w3.org/2000/svg';
const RULER_W = 42, RULER_H = 26, ORIGIN_X = 248, ORIGIN_GAP = 40, SCALE = 0.2937;

function add(name, cls, attrs, text) {
  const el = document.createElementNS(NS, name);
  if (cls) el.setAttribute('class', cls);
  for (const k in attrs) el.setAttribute(k, attrs[k]);
  if (text !== undefined) el.textContent = text;
  svg.appendChild(el);
}
const path = (cls, d, extra) => add('path', cls, Object.assign({ d }, extra));

function draw() {
  svg.replaceChildren();
  const W = svg.clientWidth, H = svg.clientHeight;
  const base = H - ORIGIN_GAP;
  const X = v => Math.floor(ORIGIN_X + v * SCALE) + 0.5;
  const Y = v => Math.floor(base - v * SCALE) + 0.5;

  add('rect', 'ruler', { x: 0, y: 0, width: RULER_W, height: H });
  add('rect', 'ruler', { x: 0, y: H - RULER_H, width: W, height: RULER_H });
  path('tick', `M${RULER_W + 0.5} 0V${H}M0 ${H - RULER_H + 0.5}H${W}`);

  for (let v = 0; v <= 1600; v += 200) {
    path('tick', `M0 ${Y(v)}H${RULER_W}`);
    add('text', '', { x: 30, y: Y(v) - 5, 'text-anchor': 'end' }, v);
  }
  for (let v = 0; X(v) < W; v += 200) {
    path('tick', `M${X(v)} ${H - RULER_H}V${H}`);
    if (X(v) + 30 < W) add('text', '', { x: X(v) + 1, y: H - 13 }, v);
  }

  path('tick', `M${X(0)} ${Y(1600)}V${Y(0)}H${X(2500)}`);
  path('bed', `M${X(0)} ${Y(1600)}H${X(2500)}V${Y(0)}`, { 'stroke-dashoffset': 14 });

  for (let c = 0; c < 20; c++) {
    const x = X(c * 100);
    path('travel', `M${x} ${Y(1500)}L${x + 17} ${Y(0)}`);
    for (let r = 0; r < 15; r++) {
      path('travel', `M${x + 17} ${Y((r + 1) * 100)}L${X((c + 1) * 100)} ${Y(r * 100)}`);
    }
  }
  const dash = { 'stroke-dasharray': '24.37 5', 'stroke-dashoffset': 12 };
  for (let r = 0; r <= 15; r++) path('cut', `M${X(0)} ${Y(r * 100)}H${X(2000)}`, dash);
  for (let c = 0; c <= 20; c++) path('cut', `M${X(c * 100)} ${Y(1500)}V${Y(0)}`, dash);
}

draw();
window.addEventListener('resize', draw);
```
